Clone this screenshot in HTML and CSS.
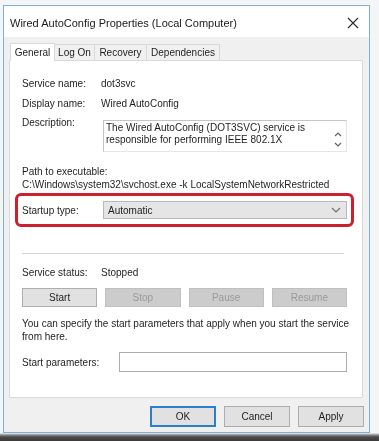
FILE: index.html
```html
<!DOCTYPE html>
<html>
<head>
<meta charset="utf-8">
<link rel="stylesheet" href="styles.css">
</head>
<body>
<div class="dialog">
  <div class="titlebar">
    <span class="title">Wired AutoConfig Properties (Local Computer)</span>
    <svg class="close" width="12" height="12" viewBox="0 0 12 12"><path d="M1 1 L11 11 M11 1 L1 11" stroke="#2b2b2b" stroke-width="1.1" fill="none"/></svg>
  </div>
  <div class="body">
    <div class="tabs">
      <div class="tab active">General</div>
      <div class="tab t-logon">Log On</div>
      <div class="tab t-recovery">Recovery</div>
      <div class="tab t-deps">Dependencies</div>
    </div>
    <div class="panel">
      <div class="row r-first"><span class="label">Service name:</span><span class="value">dot3svc</span></div>
      <div class="row"><span class="label">Display name:</span><span class="value">Wired AutoConfig</span></div>
      <div class="desc">
        <span class="label">Description:</span>
        <div class="textbox">
          <div class="tb-text">The Wired AutoConfig (DOT3SVC) service is<br>responsible for performing IEEE 802.1X</div>
          <div class="scroll">
            <svg width="8" height="6" viewBox="0 0 8 6"><path d="M1 5 L4 2 L7 5" stroke="#606060" stroke-width="1.2" fill="none"/></svg>
            <svg width="8" height="6" viewBox="0 0 8 6"><path d="M1 1 L4 4 L7 1" stroke="#606060" stroke-width="1.2" fill="none"/></svg>
          </div>
        </div>
      </div>
      <div class="path">
        <div>Path to executable:</div>
        <div>C:\Windows\system32\svchost.exe -k LocalSystemNetworkRestricted</div>
      </div>
      <div class="highlight">
        <span class="label">Startup type:</span>
        <div class="select">
          <span>Automatic</span>
          <svg width="10" height="6" viewBox="0 0 10 6"><path d="M1 1 L5 5 L9 1" stroke="#707070" stroke-width="1.2" fill="none"/></svg>
        </div>
      </div>
      <div class="sep"></div>
      <div class="row r-status"><span class="label">Service status:</span><span class="value">Stopped</span></div>
      <div class="svc-buttons">
        <button class="btn">Start</button>
        <button class="btn" disabled>Stop</button>
        <button class="btn" disabled>Pause</button>
        <button class="btn" disabled>Resume</button>
      </div>
      <p class="hint">You can specify the start parameters that apply when you start the service<br>from here.</p>
      <div class="params"><span class="label">Start parameters:</span><div class="input"></div></div>
    </div>
    <div class="footer">
      <button class="btn fbtn ok">OK</button>
      <button class="btn fbtn">Cancel</button>
      <button class="btn fbtn">Apply</button>
    </div>
  </div>
</div>
</body>
</html>
```

FILE: styles.css
```css
* { box-sizing: border-box; }
html, body { margin: 0; padding: 0; }
body {
  width: 379px;
  height: 441px;
  overflow: hidden;
  background: linear-gradient(to bottom, #f4f5f6 0, #f4f5f6 433px, #8a8a8a 435px, #4a4a4a 437px, #3c3c3c 441px);
  font-family: "Liberation Sans", Arial, sans-serif;
  font-size: 10px;
  color: #1e1e1e;
  padding: 5px 0 0 3px;
}
.dialog {
  width: 367px;
  height: 428px;
  border: 1px solid #7fb0d4;
  background: #f0f0f0;
  display: flex;
  flex-direction: column;
  filter: blur(0.35px);
}
.titlebar {
  height: 31px;
  background: #ffffff;
  display: flex;
  align-items: center;
  justify-content: space-between;
  padding: 2px 10px 0 6px;
}
.title { font-size: 11px; color: #1a1a1a; }
.close { display: block; }
.body { padding: 6px 6px 0 5px; flex: 1; display: flex; flex-direction: column; }
.tabs { display: flex; align-items: flex-end; height: 17px; position: relative; z-index: 1; }
.tab {
  height: 16px;
  border: 1px solid #d9d9d9;
  border-bottom: none;
  background: #f0f0f0;
  display: flex;
  align-items: center;
  justify-content: center;
  margin-left: -1px;
  color: #1e1e1e;
}
.tab.active {
  height: 18px;
  margin-left: 1px;
  width: 45px;
  background: #ffffff;
  margin-bottom: -1px;
  padding-bottom: 1px;
}
.t-logon { width: 41px; }
.t-recovery { width: 53px; }
.t-deps { width: 74px; }
.panel {
  background: #ffffff;
  border: 1px solid #d9d9d9;
  padding: 12px 15px 24px 12px;
  height: 338px;
}
.row { display: flex; align-items: center; height: 20px; }
.label { width: 79px; flex: none; white-space: nowrap; }
.value { white-space: nowrap; }
.desc { display: flex; align-items: flex-start; margin-top: 3px; }
.desc .label { line-height: 13px; }
.textbox {
  margin-top: 4px;
  margin-left: 2px;
  height: 32px;
  flex: 1;
  border: 1px solid #c4c4c4;
  border-right-color: #e6e6e6;
  border-bottom-color: #e6e6e6;
  display: flex;
  justify-content: space-between;
  padding: 1px 4px 0 2px;
  line-height: 11.5px;
}
.tb-text { white-space: nowrap; }
.scroll { display: flex; flex-direction: column; justify-content: space-between; padding: 9px 0 3px; }
.scroll svg { display: block; }
.path { margin-top: 13px; line-height: 13px; white-space: nowrap; }
.highlight {
  margin: 2px -7px 0 -7px;
  border: 3px solid #cc1f30;
  border-radius: 6px;
  padding: 5px 4px 5px 4px;
  display: flex;
  align-items: center;
}
.highlight .label { width: 81px; }
.select {
  flex: 1;
  height: 18px;
  background: #e5e5e5;
  border: 1px solid #b9b9b9;
  display: flex;
  align-items: center;
  justify-content: space-between;
  padding: 0 5px 0 4px;
}
.select svg { display: block; }
.sep { margin-top: 26px; height: 1px; background: #d2d2d2; margin-right: 3px; }
.r-status { margin-top: 8px; }
.svc-buttons { display: flex; gap: 8px; margin-top: 6px; }
.btn {
  font-family: inherit;
  font-size: inherit;
  color: #1e1e1e;
  background: #e1e1e1;
  border: 1px solid #adadad;
  padding: 0;
  height: 19px;
  flex: 1;
}
.btn:disabled { background: #cccccc; border-color: #bfbfbf; color: #9a9a9a; }
.hint { margin: 10px 0 0 0; line-height: 13px; white-space: nowrap; }
.params { display: flex; align-items: center; margin-top: 9px; }
.params .label { width: 97px; }
.input { flex: 1; height: 20px; border: 1px solid #acacac; background: #ffffff; }
.footer { display: flex; justify-content: flex-end; gap: 8px; margin-top: 8px; padding-right: 0; margin-right: -1px; }
.fbtn { flex: none; width: 66px; height: 21px; }
.ok { border: 2px solid #2a7fd0; }
```
